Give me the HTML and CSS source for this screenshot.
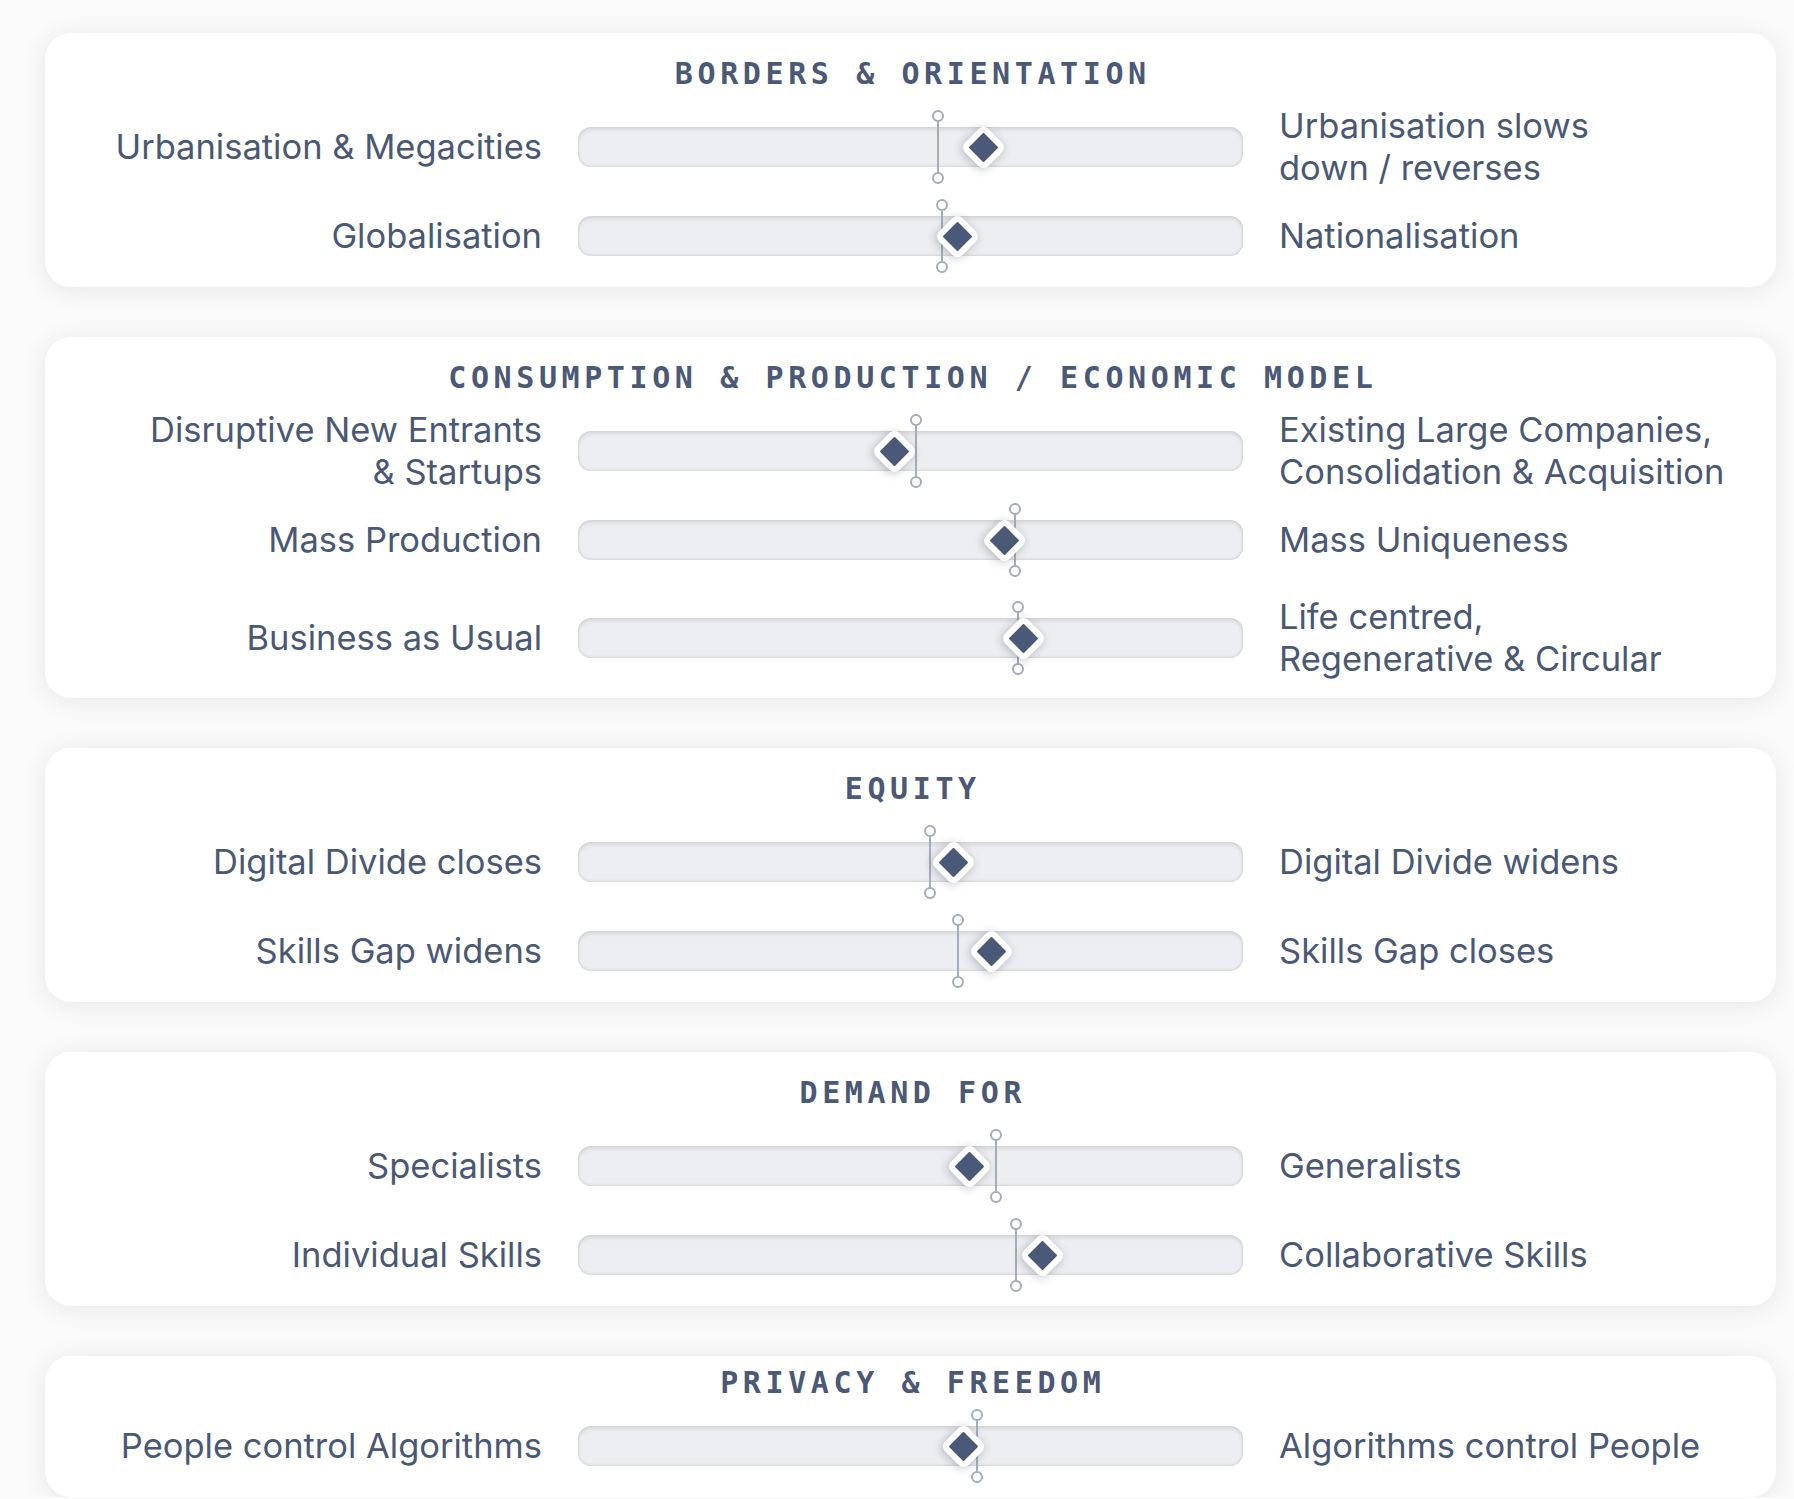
FILE: index.html
```
<!DOCTYPE html>
<html lang="en">
<head>
  <meta charset="UTF-8">
  <meta name="viewport" content="width=device-width, initial-scale=1.0">
  <title>Future Scenarios</title>
  <link rel="stylesheet" href="styles.css">
</head>
<body>
  <main class="board">

    <section class="card">
      <h2 class="card-title">BORDERS &amp; ORIENTATION</h2>
      <div class="axes">
        <div class="axis">
          <p class="pole pole-left">Urbanisation &amp; Megacities</p>
          <div class="slider">
            <div class="track"></div>
            <span class="pin" style="left: 54.1%"></span>
            <span class="knob" style="left: 61.0%"></span>
          </div>
          <p class="pole pole-right">Urbanisation slows<br>down / reverses</p>
        </div>
        <div class="axis">
          <p class="pole pole-left">Globalisation</p>
          <div class="slider">
            <div class="track"></div>
            <span class="pin" style="left: 54.8%"></span>
            <span class="knob" style="left: 57.0%"></span>
          </div>
          <p class="pole pole-right">Nationalisation</p>
        </div>
      </div>
    </section>

    <section class="card">
      <h2 class="card-title">CONSUMPTION &amp; PRODUCTION / ECONOMIC MODEL</h2>
      <div class="axes">
        <div class="axis">
          <p class="pole pole-left">Disruptive New Entrants<br>&amp; Startups</p>
          <div class="slider">
            <div class="track"></div>
            <span class="pin" style="left: 50.9%"></span>
            <span class="knob" style="left: 47.6%"></span>
          </div>
          <p class="pole pole-right">Existing Large Companies,<br>Consolidation &amp; Acquisition</p>
        </div>
        <div class="axis">
          <p class="pole pole-left">Mass Production</p>
          <div class="slider">
            <div class="track"></div>
            <span class="pin" style="left: 65.7%"></span>
            <span class="knob" style="left: 64.1%"></span>
          </div>
          <p class="pole pole-right">Mass Uniqueness</p>
        </div>
        <div class="axis axis-tall">
          <p class="pole pole-left">Business as Usual</p>
          <div class="slider">
            <div class="track"></div>
            <span class="pin" style="left: 66.1%"></span>
            <span class="knob" style="left: 67.0%"></span>
          </div>
          <p class="pole pole-right">Life centred,<br>Regenerative &amp; Circular</p>
        </div>
      </div>
    </section>

    <section class="card">
      <h2 class="card-title">EQUITY</h2>
      <div class="axes">
        <div class="axis">
          <p class="pole pole-left">Digital Divide closes</p>
          <div class="slider">
            <div class="track"></div>
            <span class="pin" style="left: 52.9%"></span>
            <span class="knob" style="left: 56.5%"></span>
          </div>
          <p class="pole pole-right">Digital Divide widens</p>
        </div>
        <div class="axis">
          <p class="pole pole-left">Skills Gap widens</p>
          <div class="slider">
            <div class="track"></div>
            <span class="pin" style="left: 57.1%"></span>
            <span class="knob" style="left: 62.2%"></span>
          </div>
          <p class="pole pole-right">Skills Gap closes</p>
        </div>
      </div>
    </section>

    <section class="card">
      <h2 class="card-title">DEMAND FOR</h2>
      <div class="axes">
        <div class="axis">
          <p class="pole pole-left">Specialists</p>
          <div class="slider">
            <div class="track"></div>
            <span class="pin" style="left: 62.9%"></span>
            <span class="knob" style="left: 58.9%"></span>
          </div>
          <p class="pole pole-right">Generalists</p>
        </div>
        <div class="axis">
          <p class="pole pole-left">Individual Skills</p>
          <div class="slider">
            <div class="track"></div>
            <span class="pin" style="left: 65.8%"></span>
            <span class="knob" style="left: 69.9%"></span>
          </div>
          <p class="pole pole-right">Collaborative Skills</p>
        </div>
      </div>
    </section>

    <section class="card card-compact">
      <h2 class="card-title">PRIVACY &amp; FREEDOM</h2>
      <div class="axes">
        <div class="axis">
          <p class="pole pole-left">People control Algorithms</p>
          <div class="slider">
            <div class="track"></div>
            <span class="pin" style="left: 60.0%"></span>
            <span class="knob" style="left: 57.9%"></span>
          </div>
          <p class="pole pole-right">Algorithms control People</p>
        </div>
      </div>
    </section>

  </main>
</body>
</html>
```

FILE: styles.css
```
html, body {
  margin: 0;
  background-color: #fbfbfb;
}
body {
  font-family: Inter, "Noto Sans", sans-serif;
  color: #4a5875;
}
.board {
  display: flex;
  flex-direction: column;
  gap: 50px;
  padding: 33px 18px 0 45px;
}
.card {
  background-color: #fff;
  border-radius: 26px;
  box-shadow: 0 3px 26px rgba(0, 0, 0, 0.09);
  padding: 24px 40px 9px;
}
.card-title {
  margin: 0 0 14px;
  padding-left: 4.6px;
  font-family: "DejaVu Sans Mono", "Liberation Mono", monospace;
  font-size: 30px;
  font-weight: bold;
  line-height: 34px;
  letter-spacing: 4.6px;
  text-align: center;
  color: #4b5876;
}
.card-compact {
  padding-top: 10px;
}
.card-compact .card-title {
  margin-bottom: 4px;
}
.axes {
  display: flex;
  flex-direction: column;
  gap: 5px;
}
.axis {
  display: grid;
  grid-template-columns: 1fr 665px 1fr;
  column-gap: 36px;
  align-items: center;
  min-height: 84px;
}
.axis-tall {
  min-height: 102px;
}
.pole {
  margin: 0;
  font-size: 34.5px;
  line-height: 42px;
  white-space: nowrap;
}
.pole-left {
  text-align: right;
}
.pole-right {
  text-align: left;
}
.slider {
  position: relative;
  height: 84px;
}
.track {
  position: absolute;
  left: 0;
  right: 0;
  top: 22px;
  height: 40px;
  border-radius: 13px;
  background-color: #eceef1;
  box-shadow: inset 0 4px 5px -2px rgba(0, 0, 0, 0.13), inset 0 -2px 3px -1px rgba(0, 0, 0, 0.1), inset 2px 0 3px -1px rgba(0, 0, 0, 0.06), inset -2px 0 3px -1px rgba(0, 0, 0, 0.06);
}
.pin {
  position: absolute;
  top: 5px;
  width: 12px;
  height: 74px;
  transform: translateX(-50%);
  background: linear-gradient(#a5acba, #a5acba) center / 2px 100% no-repeat;
}
.pin::before,
.pin::after {
  content: "";
  position: absolute;
  left: 0;
  width: 12px;
  height: 12px;
  box-sizing: border-box;
  border: 2px solid #a5acba;
  border-radius: 50%;
  background-color: #fff;
}
.pin::before {
  top: 0;
}
.pin::after {
  bottom: 0;
}
.knob {
  position: absolute;
  top: 25.5px;
  width: 33px;
  height: 33px;
  margin-left: -16.5px;
  box-sizing: border-box;
  border: 6px solid #fff;
  border-radius: 7px;
  background-color: #4b5978;
  box-shadow: 0 2px 10px rgba(40, 50, 70, 0.3);
  transform: rotate(45deg);
}
```
